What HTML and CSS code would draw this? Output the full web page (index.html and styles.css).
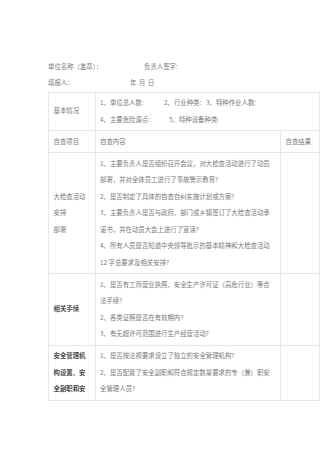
FILE: index.html
```html
<!DOCTYPE html>
<html lang="zh">
<head>
<meta charset="utf-8">
<link rel="stylesheet" href="styles.css">
</head>
<body>
<div class="page">
  <div class="meta">
    <span class="m-unit">单位名称（盖章）：</span><span>负责人签字:</span>
  </div>
  <div class="meta">
    <span class="m-fill">填报人：</span><span class="m-d">年</span><span class="m-d2">月</span><span>日</span>
  </div>
  <table class="sheet">
    <colgroup>
      <col class="c1"><col class="c2"><col class="c3">
    </colgroup>
    <tr>
      <td class="mid">基本情况</td>
      <td colspan="2">
        <span class="b1">1、单位总人数:</span><span class="b2">2、行业种类:</span><span>3、特种作业人数:</span><br>
        <span class="b4">4、主要危险源点:</span><span>5、特种设备种类:</span>
      </td>
    </tr>
    <tr>
      <td>自查项目</td>
      <td>自查内容</td>
      <td>自查结果</td>
    </tr>
    <tr>
      <td class="mid">大检查活动<br>安排<br>部署</td>
      <td>1、主要负责人是否组织召开会议，对大检查活动进行了动员<br>部署，并对全体员工进行了事故警示教育?<br>2、是否制定了具体的自查自纠实施计划或方案?<br>3、主要负责人是否与政府、部门或乡镇签订了大检查活动承<br>诺书，并在动员大会上进行了宣读?<br>4、所有人员是否知道中央领导批示的基本精神和大检查活动<br>12 字总要求及相关安排?</td>
      <td></td>
    </tr>
    <tr>
      <td class="mid strong">相关手续</td>
      <td>1、是否有工商营业执照、安全生产许可证（高危行业）等合<br>法手续?<br>2、各类证照是否在有效期内?<br>3、有无超许可范围进行生产经营活动?</td>
      <td></td>
    </tr>
    <tr>
      <td class="strong">安全管理机<br>构设置、安<br>全副职和安</td>
      <td>1、是否按法规要求设立了独立的安全管理机构?<br>2、是否配置了安全副职和符合规定数量要求的专（兼）职安<br>全管理人员?</td>
      <td></td>
    </tr>
  </table>
</div>
</body>
</html>
```
FILE: styles.css
```css
html, body {
  margin: 0;
  padding: 0;
  background: #ffffff;
}
body {
  width: 320px;
  height: 453px;
  overflow: hidden;
  font-family: "Noto Sans CJK SC", "Noto Sans", sans-serif;
  font-size: 6.4px;
  line-height: 16.5px;
  color: #7a7a7a;
}
.page {
  padding: 58.75px 0 0 48px;
}
.meta {
  display: flex;
  white-space: nowrap;
}
.m-unit {
  width: 96px;
}
.m-fill {
  width: 82px;
}
.m-d {
  width: 9px;
}
.m-d2 {
  width: 9px;
}
.sheet {
  border-collapse: collapse;
  table-layout: fixed;
  width: 271px;
}
.c1 { width: 46.5px; }
.c2 { width: 185.5px; }
.c3 { width: 39px; }
.sheet td {
  border: 1px solid #e8e8e8;
  padding: 2.25px 4px 2.25px 4.5px;
  vertical-align: top;
  white-space: nowrap;
  overflow: hidden;
}
.sheet td.mid {
  vertical-align: middle;
}
.sheet td.strong {
  font-weight: bold;
  color: #4a4a4a;
}
.b1 {
  display: inline-block;
  width: 64px;
}
.b2 {
  display: inline-block;
  width: 42px;
}
.b4 {
  display: inline-block;
  width: 69px;
}
```
